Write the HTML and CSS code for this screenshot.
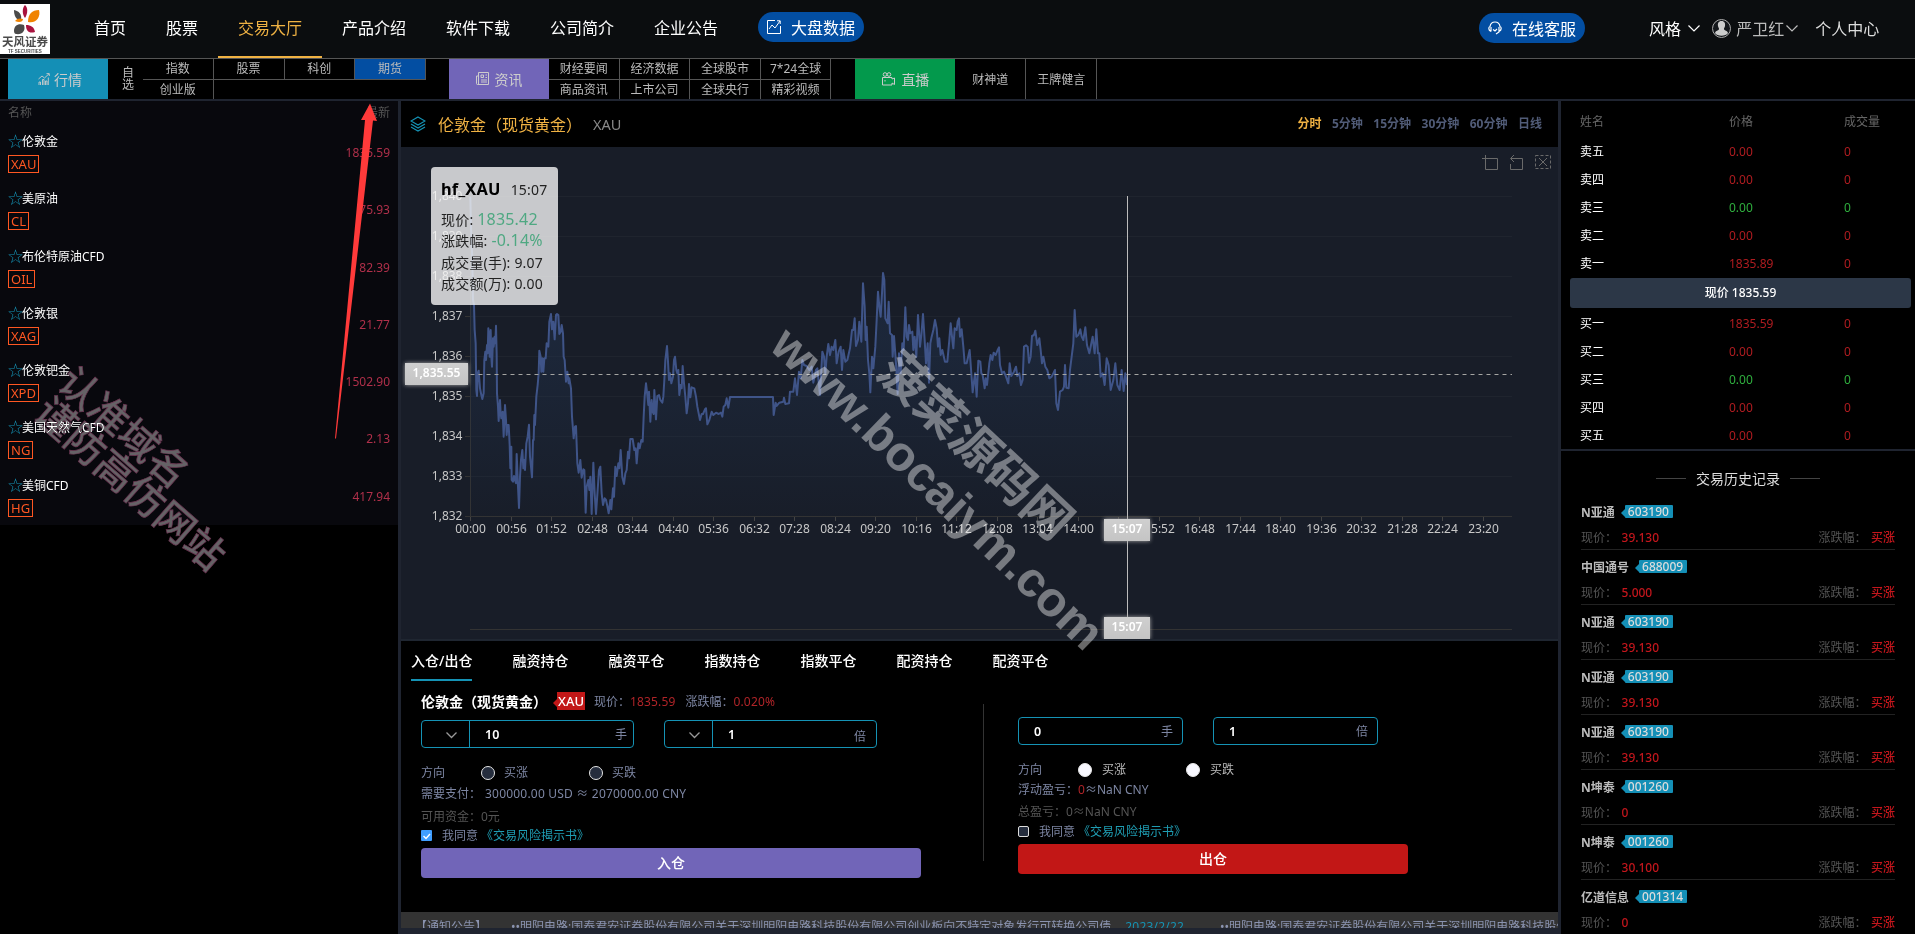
FILE: index.html
```html
<!DOCTYPE html>
<html lang="zh-CN">
<head>
    <meta charset="UTF-8">
    <meta name="viewport" content="width=device-width, initial-scale=1.0">
    <title>交易大厅</title>
    <link rel="stylesheet" href="styles.css">
</head>
<body>

<header class="header">
    <div class="logo">
        <svg width="50" height="50" viewBox="0 0 50 50">
            <rect width="50" height="50" fill="#fff"/>
            <path d="M25 1c3 3 3 8 0 13c-3-4-3-10 0-13z" fill="#a8123e"/>
            <path d="M39 6c2 7-3 14-11 12c0-8 4-12 11-12z" fill="#f08300"/>
            <path d="M14 6c5 1 8 4 7 10c-5 0-7-4-7-10z" fill="#4a4a4a"/>
            <path d="M15 17c2-3 6-3 8-2c0 3-4 4-8 2z" fill="#f08300"/>
            <path d="M14 27c0-5 4-8 10-6c2 6-2 10-8 9c-1 0-2-1-2-3z" fill="#4a4a4a"/>
            <path d="M26 21c5 0 8 2 9 7c-6 2-9-1-9-7z" fill="#a8123e"/>
            <text x="25" y="42" class="logo-cn">天风证券</text>
            <text x="25" y="49" class="logo-en">TF SECURITIES</text>
        </svg>
    </div>
    <nav class="nav">
        <a>首页</a>
        <a>股票</a>
        <a class="active">交易大厅</a>
        <a>产品介绍</a>
        <a>软件下载</a>
        <a>公司简介</a>
        <a>企业公告</a>
    </nav>
    <div class="pill pill-data">
        <svg width="14" height="14" viewBox="0 0 14 14" fill="none" stroke="#fff"><path d="M8 .5H.5v13h13V6M2 9l3-4 3 3 5-7M10 .8h3.2V4"/></svg>
        <span>大盘数据</span>
    </div>
    <div class="pill pill-service">
        <svg width="14" height="14" viewBox="0 0 14 14" fill="none" stroke="#fff" stroke-width="1.2"><path d="M3 10.5C0 9 .5 6 2 5.500C3-.5 11-.5 12 5.500c1.500.5 2 3.500-1 5M3 6v4.500M11 6v5l-3 2M5 8.500l2 1.500 2-2"/></svg>
        <span>在线客服</span>
    </div>
    <div class="user">
        <span class="style-name">风格</span>
        <svg class="arrow" width="12" height="7" viewBox="0 0 12 7" fill="none" stroke="#fff" stroke-width="1.2"><path d="M.5.5L6 6l5.500-5.500"/></svg>
        <svg class="avatar" width="19" height="19" viewBox="0 0 19 19"><circle cx="9.500" cy="9.500" r="9" fill="#14171b" stroke="#aaa"/><path d="M9.500 2c3 0 4 2.500 3.500 5c-.3 1.500-1 2-1 3c0 1.500 3.500 1.500 4 4c-2 3.500-11 3.500-13 0c.5-2.500 4-2.500 4-4c0-1-.7-1.500-1-3c-.5-2.500.5-5 3.500-5z" fill="#ccc"/></svg>
        <span class="user-name">严卫红</span>
        <svg width="12" height="7" viewBox="0 0 12 7" fill="none" stroke="#bbb" stroke-width="1.200"><path d="M.5.5L6 6l5.500-5.500"/></svg>
        <span class="center-link">个人中心</span>
    </div>
</header>

<div class="subnav">
    <div class="block block-quote">
        <svg width="12" height="12" viewBox="0 0 12 12" fill="none" stroke="#ccc" stroke-width=".9"><path d="M1 12V9h1.500v3M4.500 12V6.500H6V12M7.500 12V8H9v4M10.300 12V4.500M.5 6l3.500-3 2.500 2L11 .8M8.500.6h2.800V3"/></svg>
        <span>行情</span>
    </div>
    <div class="self">自选</div>
    <div class="cells cells-quote">
        <a>指数</a><a>股票</a><a>科创</a><a class="on">期货</a>
        <a>创业版</a>
    </div>
    <div class="block block-news">
        <svg width="13" height="13" viewBox="0 0 13 13" fill="none" stroke="#ccc"><path d="M2.500.5h10v12H1.500a1 1 0 0 1-1-1V4h2v7.500M2.500.5V12M5 3h2.500v2.500H5zM9.500 3H11M9.500 5.500H11M5 8h6M5 10h6"/></svg>
        <span>资讯</span>
    </div>
    <div class="cells cells-news">
        <a>财经要闻</a><a>经济数据</a><a>全球股市</a><a>7*24全球</a>
        <a>商品资讯</a><a>上市公司</a><a>全球央行</a><a>精彩视频</a>
    </div>
    <div class="block block-live">
        <svg width="14" height="14" viewBox="0 0 14 14" fill="none" stroke="#ccc"><circle cx="4" cy="2.500" r="1.800"/><circle cx="8" cy="2.500" r="1.800"/><path d="M11 7V5.500H1.500V13H11v-2l2.500 1.500V6zM4 8v1.500"/></svg>
        <span>直播</span>
    </div>
    <div class="cells cells-live">
        <a>财神道</a><a>王牌健言</a>
    </div>
</div>

<div class="main">
    <aside class="left">
        <div class="list">
            <div class="list-head"><span>名称</span><span>最新</span></div>
            <div class="quote"><div><p>伦敦金</p><i>XAU</i></div><b>1835.59</b></div>
            <div class="quote"><div><p>美原油</p><i>CL</i></div><b>75.93</b></div>
            <div class="quote"><div><p>布伦特原油CFD</p><i>OIL</i></div><b>82.39</b></div>
            <div class="quote"><div><p>伦敦银</p><i>XAG</i></div><b>21.77</b></div>
            <div class="quote"><div><p>伦敦钯金</p><i>XPD</i></div><b>1502.90</b></div>
            <div class="quote"><div><p>美国天然气CFD</p><i>NG</i></div><b>2.13</b></div>
            <div class="quote"><div><p>美铜CFD</p><i>HG</i></div><b>417.94</b></div>
        </div>
    </aside>

    <section class="middle">
        <div class="chart-head">
            <svg width="16" height="16" viewBox="0 0 16 16" fill="none" stroke="#1593b5" stroke-width="1.200"><path d="M8 1l7 4-7 4-7-4zM1 8l7 4 7-4M1 11l7 4 7-4"/></svg>
            <h1>伦敦金（现货黄金）</h1>
            <span class="code">XAU</span>
            <div class="periods">
                <a class="on">分时</a><a>5分钟</a><a>15分钟</a><a>30分钟</a><a>60分钟</a><a>日线</a>
            </div>
        </div>

        <div class="chart">
            <svg id="chart" width="1157" height="492" viewBox="401 147 1157 492">
                <defs>
                    <linearGradient id="area" gradientUnits="userSpaceOnUse" x1="0" y1="600" x2="0" y2="1130">
                        <stop offset="0" stop-color="#24395a" stop-opacity=".35"/>
                        <stop offset="1" stop-color="#24395a" stop-opacity=".02"/>
                    </linearGradient>
                    <linearGradient id="tagfill" x1="0" y1="0" x2="0" y2="1">
                        <stop offset="0" stop-color="#cfcfcf"/>
                        <stop offset="1" stop-color="#c4c4c4"/>
                    </linearGradient>
                </defs>
                <g id="grid"></g>
                <!-- price line, drawn in thirds of a pixel -->
                <g id="series" transform="translate(400 140) scale(.33333)"></g>
                <path d="M470.500 374.500H1512" stroke="#a5a5a2" stroke-dasharray="4 4"/>
                <path d="M1127.500 196V629" stroke="#bcbcbc"/>
                <g class="marks">
                    <rect x="405" y="363" width="63" height="22"/><text x="436.500" y="377">1,835.55</text>
                    <rect x="1104" y="519" width="46" height="22"/><text x="1127" y="533">15:07</text>
                    <rect x="1104" y="617" width="46" height="22"/><text x="1127" y="631">15:07</text>
                </g>
                <g fill="none" stroke="#6a6a6a">
                    <path d="M1482 158.500H1497.500V169.500H1485.500V155"/>
                    <path d="M1514 155l-3.500 3.500 3.500 3.500M1511 158.500H1522.500V169.500H1510.500V164"/>
                    <path d="M1535.500 155.500H1550.500V168.500H1535.500Z" stroke-dasharray="3 2"/>
                    <path d="M1539 158l8 8M1547 158l-8 8"/>
                </g>
            </svg>
            <div class="tooltip">
                <p class="tip-title"><strong>hf_XAU</strong>15:07</p>
                <p>现价: <em>1835.42</em></p>
                <p>涨跌幅: <em>-0.14%</em></p>
                <p>成交量(手): 9.07</p>
                <p>成交额(万): 0.00</p>
            </div>
        </div>

        <div class="trade">
            <div class="tabs">
                <a class="on">入仓/出仓</a><a>融资持仓</a><a>融资平仓</a><a>指数持仓</a><a>指数平仓</a><a>配资持仓</a><a>配资平仓</a>
            </div>
            <div class="forms">
                <div class="form form-in">
                    <div class="form-title">
                        <strong>伦敦金（现货黄金）</strong>
                        <span class="flag">XAU</span>
                        <span>现价：</span><span class="red">1835.59</span>
                        <span class="change">涨跌幅：</span><span class="red">0.020%</span>
                    </div>
                    <div class="fields">
                        <div class="field">
                            <div class="drop"><svg width="11" height="7" viewBox="0 0 11 7" fill="none" stroke="#999" stroke-width="1.300"><path d="M.5.5l5 5 5-5"/></svg></div>
                            <b>10</b><span>手</span>
                        </div>
                        <div class="field field-times">
                            <div class="drop"><svg width="11" height="7" viewBox="0 0 11 7" fill="none" stroke="#999" stroke-width="1.300"><path d="M.5.5l5 5 5-5"/></svg></div>
                            <b>1</b><span>倍</span>
                        </div>
                    </div>
                    <div class="direction">
                        <span class="dir-label">方向</span>
                        <span class="option"><i class="radio"></i>买涨</span>
                        <span class="option"><i class="radio"></i>买跌</span>
                    </div>
                    <div class="line pay"><span>需要支付：</span><span class="sum">300000.00 USD ≈ 2070000.00 CNY</span></div>
                    <div class="line dim">可用资金：0元</div>
                    <div class="agree">
                        <i class="check checked"><svg width="11" height="11" viewBox="0 0 11 11" fill="none" stroke="#fff" stroke-width="1.400"><path d="M2.500 6l2.500 2.500L9 4"/></svg></i>
                        <span>我同意</span><a>《交易风险揭示书》</a>
                    </div>
                    <div class="btn btn-in">入仓</div>
                </div>
                <div class="split"></div>
                <div class="form form-out">
                    <div class="fields">
                        <div class="field"><b>0</b><span>手</span></div>
                        <div class="field"><b>1</b><span>倍</span></div>
                    </div>
                    <div class="direction">
                        <span class="dir-label">方向</span>
                        <span class="option"><i class="radio"></i>买涨</span>
                        <span class="option"><i class="radio"></i>买跌</span>
                    </div>
                    <div class="line profit">浮动盈亏：<span class="red">0</span>≈NaN CNY</div>
                    <div class="line dim">总盈亏：0≈NaN CNY</div>
                    <div class="agree">
                        <i class="check"></i>
                        <span>我同意</span><a>《交易风险揭示书》</a>
                    </div>
                    <div class="btn btn-out">出仓</div>
                </div>
            </div>
        </div>

        <div class="notice">
            <span class="notice-name">【通知公告】</span>
            <span class="notice-item">••明阳电路:国泰君安证券股份有限公司关于深圳明阳电路科技股份有限公司创业板向不特定对象发行可转换公司债</span>
            <span class="notice-date">2023/2/22</span>
            <span class="notice-item">••明阳电路:国泰君安证券股份有限公司关于深圳明阳电路科技股份有限公司</span>
        </div>
    </section>

    <aside class="right">
        <div class="depth">
            <div class="depth-row depth-head"><span>姓名</span><span>价格</span><span>成交量</span></div>
            <div class="depth-row"><span>卖五</span><span>0.00</span><span>0</span></div>
            <div class="depth-row"><span>卖四</span><span>0.00</span><span>0</span></div>
            <div class="depth-row down"><span>卖三</span><span>0.00</span><span>0</span></div>
            <div class="depth-row"><span>卖二</span><span>0.00</span><span>0</span></div>
            <div class="depth-row"><span>卖一</span><span>1835.89</span><span>0</span></div>
            <div class="now">现价 1835.59</div>
            <div class="depth-row"><span>买一</span><span>1835.59</span><span>0</span></div>
            <div class="depth-row"><span>买二</span><span>0.00</span><span>0</span></div>
            <div class="depth-row down"><span>买三</span><span>0.00</span><span>0</span></div>
            <div class="depth-row"><span>买四</span><span>0.00</span><span>0</span></div>
            <div class="depth-row"><span>买五</span><span>0.00</span><span>0</span></div>
        </div>
        <div class="history">
            <h2>交易历史记录</h2>
            <div id="records"></div>
        </div>
    </aside>
</div>

<!-- watermark and pointer over the whole page -->
<svg class="overlay overlay-warn" width="1915" height="934" viewBox="0 0 1915 934">
    <g class="mark-warn">
        <text transform="translate(80 388) rotate(41.200)" x="-20" y="15">认准域名</text>
        <text transform="translate(56.700 418.300) rotate(41.200)" x="-20" y="15">谨防高仿网站</text>
    </g>
</svg>
<svg class="overlay" width="1915" height="934" viewBox="0 0 1915 934">
    <g class="mark-site">
        <text transform="translate(768 348) rotate(43.900)" font-size="49">www.bocaiym.com</text>
        <text transform="translate(905 378.300) rotate(43.300)" x="-24.500" y="18" font-size="49">菠菜源码网</text>
    </g>
    <path d="M370 103.500L377 121L373 120.500L336 438.500H335L365 120L361 120Z" fill="#ff3a3a"/>
</svg>

<script src="script.js"></script>
</body>
</html>
```

FILE: styles.css
```css
* {
    box-sizing: border-box;
}
body {
    margin: 0;
    width: 1915px;
    height: 934px;
    overflow: hidden;
    position: relative;
    background: #000;
    color: #fff;
    font-family: "Noto Sans", "Noto Sans CJK SC", sans-serif;
    font-size: 12px;
}
p, h1, h2 {
    margin: 0;
    font-weight: normal;
}
i, em {
    font-style: normal;
}
svg {
    display: block;
    flex: none;
}
.red {
    color: #b02428;
}

/* header */
.header {
    display: flex;
    align-items: center;
    height: 59px;
    padding-bottom: 2px;
    background: #0b0d0f;
    border-bottom: 1px solid #555;
    font-size: 16px;
}
.logo {
    width: 50px;
    margin: 1px 24px 0 0;
}
.logo-cn {
    font: bold 11.500px "Noto Sans CJK SC", sans-serif;
    text-anchor: middle;
    fill: #4a4a4a;
}
.logo-en {
    font: bold 4.500px "Liberation Sans", sans-serif;
    text-anchor: middle;
    fill: #4a4a4a;
}
.nav {
    display: flex;
    align-self: stretch;
    margin-bottom: -2px;
}
.nav a {
    padding: 0 20px;
    line-height: 56px;
    height: 58px;
}
.nav .active {
    color: #f0b243;
    border-bottom: 2px solid #f0b243;
}
.pill {
    display: flex;
    align-items: center;
    gap: 10px;
    height: 30px;
    margin-top: -2px;
    border-radius: 15px;
    background: #034ea2;
}
.pill-data {
    width: 106px;
    padding-left: 9px;
    margin-left: 20px;
}
.pill-service {
    width: 106px;
    padding-left: 9px;
    margin-left: 615px;
    margin-top: 0;
}
.user {
    display: flex;
    align-items: center;
    margin-left: 64px;
}
.arrow {
    margin: 0 12px 0 7px;
}
.user-name {
    margin: 0 2px 0 5px;
    color: #bbb;
}
.center-link {
    margin-left: 17px;
    color: #ddd;
}

/* second menu */
.subnav {
    display: flex;
    height: 42px;
    padding-left: 8px;
    border-bottom: 2px solid #1f2430;
    color: #bbb;
}
.block {
    display: flex;
    align-items: center;
    justify-content: center;
    gap: 4px;
    width: 100px;
    height: 40px;
    padding-bottom: 1px;
    font-size: 14px;
    color: #ccc;
}
.block-quote {
    padding-left: 4px;
    background: #148fb6;
}
.block-news {
    margin-left: 23px;
    gap: 6px;
    background: #7165b8;
}
.block-live {
    margin-left: 24px;
    gap: 6px;
    background: #03994c;
}
.self {
    width: 12px;
    margin: 8px 9px 0 14px;
    line-height: 12px;
}
.cells {
    display: grid;
    grid-template-columns: repeat(4, 70.750px);
    grid-template-rows: 21px 19px;
}
.cells a {
    border-right: 1px solid #555;
    text-align: center;
    line-height: 20px;
}
.cells-quote a:nth-child(-n+4),
.cells-news a:nth-child(-n+4) {
    border-bottom: 1px solid #555;
}
.cells-news {
    grid-template-columns: repeat(4, 70.600px);
}
.cells .on {
    background: #034ea2;
}
.cells-live {
    grid-template-columns: repeat(2, 71px);
    grid-template-rows: 40px;
}
.cells-live a {
    line-height: 41px;
}

.main {
    display: flex;
    height: 833px;
}

/* quote list */
.left {
    width: 401px;
    border-right: 3px solid #1f2430;
}
.list {
    height: 424px;
    padding: 0 8px;
    background: #08080d;
}
.list-head {
    display: flex;
    justify-content: space-between;
    height: 22px;
    line-height: 24px;
    color: #555;
}
.quote {
    display: flex;
    justify-content: space-between;
    height: 57.300px;
    padding-top: 9px;
}
.quote p {
    line-height: 20px;
    height: 20px;
}
.quote p::before {
    content: "☆";
    color: #1593b5;
    font: 19px/12px "DejaVu Sans", sans-serif;
    display: inline-block;
    width: 14px;
    text-indent: -1px;
    vertical-align: -2px;
}
.quote i {
    display: inline-block;
    height: 18px;
    margin-top: 3px;
    padding: 0 2px;
    border: 1px solid #ff5722;
    color: #ff5722;
    font-size: 13px;
    line-height: 17px;
}
.quote b {
    margin-top: 12px;
    font-weight: normal;
    line-height: 18px;
    color: #b0304a;
}

/* chart */
.middle {
    width: 1157px;
    border-bottom: 6px solid #1f2430;
}
.chart-head {
    display: flex;
    align-items: center;
    height: 46px;
    padding: 0 16px 0 9px;
}
.chart-head h1 {
    margin-left: 12px;
    font-size: 16px;
    color: #f0b243;
}
.code {
    margin-left: 11px;
    font-size: 14.500px;
    color: #888;
}
.periods {
    display: flex;
    gap: 10.500px;
    margin: -2px 0 0 auto;
    font-weight: bold;
    color: #515c78;
}
.periods .on {
    color: #f0b243;
}
.chart {
    position: relative;
    height: 494px;
    background: #181d28;
    border-bottom: 2px solid #1f2631;
}
.marks rect {
    fill: url(#tagfill);
    filter: drop-shadow(0 0 2px #aaa);
}
.marks text {
    fill: #fff;
    text-anchor: middle;
    font-weight: 600;
}
.axis-text {
    fill: #c8c8c8;
}
.tooltip {
    position: absolute;
    left: 30px;
    top: 20px;
    width: 127px;
    height: 138px;
    padding: 11px 10px;
    border-radius: 4px;
    background: rgba(245, 245, 245, .8);
    color: #222;
    font-size: 14px;
    line-height: 21.600px;
    letter-spacing: .2px;
    white-space: nowrap;
}
.tip-title {
    margin-bottom: 8px;
}
.tip-title strong {
    margin-right: 10px;
    font-size: 16.400px;
    color: #000;
}
.tooltip em {
    font-size: 16px;
    line-height: 16px;
    color: #4fa882;
}

/* trade forms */
.trade {
    height: 271px;
    padding: 0 10px;
}
.tabs {
    display: flex;
    gap: 40px;
    font-size: 14px;
    font-weight: 500;
    line-height: 40px;
}
.tabs a {
    height: 40px;
}
.tabs .on {
    border-bottom: 2px solid #1593b5;
}
.forms {
    display: flex;
    padding-left: 10px;
    color: #7d86a3;
}
.form-in {
    width: 500px;
}
.split {
    width: 1px;
    height: 157px;
    margin: 23px 34px 0 62px;
    background: #333;
}
.form-out {
    width: 390px;
    padding-top: 36px;
}
.form-title {
    display: flex;
    align-items: center;
    height: 28px;
    margin-top: 6px;
}
.form-title strong {
    width: 136px;
    font-size: 14px;
    color: #fff;
}
.flag {
    position: relative;
    width: 28px;
    height: 18px;
    margin-right: 9px;
    background: #c21717;
    color: #fff;
    font-size: 13px;
    font-weight: 500;
    line-height: 18px;
    text-align: center;
}
.flag::before {
    content: "";
    position: absolute;
    left: -4px;
    top: 7px;
    border: 4px solid transparent;
    border-left: 0;
    border-right-color: #c21717;
}
.change {
    margin-left: 10px;
}
.form-title .red {
    letter-spacing: .15px;
}
.fields {
    display: flex;
    gap: 30px;
}
.form-in .fields {
    margin-top: 5px;
}
.field {
    display: flex;
    align-items: center;
    width: 213px;
    height: 28px;
    padding-right: 6px;
    border: 1px solid #1593b5;
    border-radius: 4px;
}
.field b {
    flex: 1;
    margin-left: 15px;
    color: #fff;
    font-size: 12.500px;
    font-weight: 600;
}
.field-times {
    padding-right: 10px;
}
.field-times span {
    margin-top: 3px;
}
.form-out .field {
    width: 165px;
    padding-right: 9px;
}
.drop {
    display: flex;
    align-items: center;
    justify-content: flex-end;
    width: 48px;
    height: 26px;
    padding: 3px 12px 0 0;
    border-right: 1px solid #1593b5;
}
.direction {
    display: flex;
    height: 20px;
    margin-top: 15px;
    line-height: 20px;
}
.dir-label {
    width: 60px;
}
.option {
    display: flex;
    align-items: center;
    width: 108px;
}
.radio {
    width: 14px;
    height: 14px;
    margin-right: 9px;
    border: 1px solid #e6e6e6;
    border-radius: 50%;
    background: #252d3d;
}
.form-out .radio {
    background: #f8f8ff;
    margin-right: 10px;
}
.form-out .option {
    color: #bbb;
}
.line {
    height: 20px;
    line-height: 20px;
}
.pay {
    display: flex;
    gap: 4px;
    margin-top: 1px;
}
.sum {
    letter-spacing: .2px;
}
.dim {
    margin-top: 3px;
    color: #555;
}
.form-out .dim {
    margin-top: 2px;
}
.agree {
    display: flex;
    align-items: center;
    height: 16px;
}
.form-out .agree {
    margin-top: 1px;
}
.check {
    width: 11px;
    height: 11px;
    margin-right: 10px;
    border: 1px solid #ddd;
    border-radius: 2px;
    background: #252d3d;
}
.checked {
    border: 0;
    border-radius: 1px;
    background: #409eff;
}
.agree a {
    margin-left: 3px;
    color: #1f9db3;
}
.btn {
    height: 30px;
    margin-top: 5px;
    border-radius: 4px;
    color: #fff;
    font-size: 14px;
    font-weight: 500;
    line-height: 30px;
    text-align: center;
}
.btn-in {
    background: #7165b8;
}
.btn-out {
    background: #c21716;
}
.notice {
    display: flex;
    height: 16px;
    padding-left: 14px;
    overflow: hidden;
    background: #333;
    color: #8a93b0;
    line-height: 30px;
    white-space: nowrap;
}
.notice-name {
    width: 96px;
    flex: none;
}
.notice-item {
    flex: none;
}
.notice-date {
    margin: 0 36px 0 14px;
    letter-spacing: .2px;
    color: #1593b5;
}

/* right column */
.right {
    width: 357px;
    border-left: 3px solid #1f2430;
}
.depth {
    height: 350px;
    padding: 8px 4px 0 9px;
    border-bottom: 2px solid #1f2430;
}
.depth-row {
    display: grid;
    grid-template-columns: 149px 115px auto;
    height: 28px;
    padding-left: 10px;
    line-height: 28px;
    color: #b01c20;
}
.depth-row span:first-child {
    color: #fff;
}
.depth-head {
    height: 29px;
    line-height: 26px;
}
.depth-head span,
.depth-head span:first-child {
    color: #666;
}
.down {
    color: #2fae3e;
}
.down span:first-child {
    color: #fff;
}
.now {
    height: 30px;
    margin-bottom: 2px;
    border-radius: 3px;
    background: #2c3747;
    line-height: 30px;
    text-align: center;
    font-weight: 500;
}
.history {
    padding: 14px 20px 0;
}
.history h2 {
    display: flex;
    align-items: center;
    justify-content: center;
    gap: 10px;
    height: 26px;
    margin-bottom: 4px;
    font-size: 14px;
    color: #ddd;
}
.history h2::before,
.history h2::after {
    content: "";
    width: 30px;
    height: 1px;
    background: #444;
}
.record {
    height: 55px;
    border-bottom: 1px solid #222;
}
.record-name {
    display: flex;
    align-items: center;
    gap: 10px;
    height: 33px;
    font-weight: bold;
    color: #bbb;
}
.stock {
    position: relative;
    height: 13px;
    padding: 0 4px 0 3px;
    border-radius: 1px;
    background: #148fb6;
    color: #ddd;
    font-weight: 500;
    line-height: 13px;
}
.stock::before {
    content: "";
    position: absolute;
    left: -4px;
    top: 4px;
    border: 4px solid transparent;
    border-left: 0;
    border-right-color: #148fb6;
}
.record-price {
    display: flex;
    line-height: 20px;
    color: #555;
}
.record-price b {
    margin-left: 4.500px;
    font-weight: 500;
    color: #c4161c;
}
.record-price .rate {
    margin-left: auto;
}

.overlay {
    position: absolute;
    left: 0;
    top: 0;
    pointer-events: none;
}
.overlay-warn {
    mix-blend-mode: lighten;
}
.mark-site {
    font-family: "Liberation Sans", "Noto Sans CJK SC", sans-serif;
    font-weight: bold;
    fill: rgba(255, 255, 255, .41);
}
.mark-warn {
    font: 500 39.500px "Noto Sans CJK SC", sans-serif;
    fill: #656266;
    stroke: #6a3450;
    stroke-width: .7px;
}
```

FILE: script.js
```js
const NS = 'http://www.w3.org/2000/svg';

function add(parent, tag, attrs, text) {
    const el = document.createElementNS(NS, tag);
    for (const key in attrs) el.setAttribute(key, attrs[key]);
    if (text) el.textContent = text;
    parent.appendChild(el);
}

// axes and grid
const grid = document.getElementById('grid');
for (let i = 0; i <= 8; i++) {
    const y = 516.5 - i * 40;
    add(grid, 'path', { d: `M470 ${y}H1512`, stroke: i ? '#1f242e' : '#333' });
    add(grid, 'path', { d: `M465 ${y}H470`, stroke: '#333' });
    add(grid, 'text', { x: 462.5, y: y + 3, class: 'axis-text', 'text-anchor': 'end' }, '1,' + (832 + i));
}
add(grid, 'path', { d: 'M470.5 196V517M470 629.5H1512', stroke: '#333', fill: 'none' });
for (let i = 0; i <= 25; i++) {
    const x = Math.round(470 + i * 40.51) + 0.5;
    const min = i * 56;
    const label = String(Math.floor(min / 60)).padStart(2, '0') + ':' + String(min % 60).padStart(2, '0');
    add(grid, 'path', { d: `M${x} 517V521`, stroke: '#444' });
    add(grid, 'text', { x: x, y: 533, class: 'axis-text', 'text-anchor': 'middle' }, label);
}

// night session, then day session
const night = '211,170 213,260 217,360 219,480 222,495 224,570 227,610 229,750 231,768 233,700 236,692 240,745 244,765 247,777 251,760 253,660 256,635 258,660 261,615 263,640 265,565 268,600 269,650 272,570 274,650 276,680 279,595 281,620 284,590 286,610 288,557 290,640 291,760 294,800 296,843 300,780 302,820 304,835 308,815 311,890 315,795 318,840 320,885 323,855 326,855 329,915 331,985 334,920 335,1020 339,1025 342,1008 345,1020 348,1030 350,942 354,1040 357,1104 360,1010 363,960 367,930 370,985 373,960 375,990 379,910 383,890 387,854 390,950 393,980 396,1012 399,900 401,900 403,825 405,855 409,770 413,735 416,700 418,632 422,650 424,695 427,655 430,695 433,655 437,655 440,610 445,620 448,545 453,522 456,568 460,545 464,598 468,525 471,522 475,525 478,582 482,575 485,555 489,580 491,650 494,660 498,725 502,695 506,730 508,715 513,745 516,830 518,855 521,895 525,860 528,858 532,970 536,998 541,960 545,1013 550,988 553,990 557,1118 560,1040 565,1020 568,1050 571,1010 575,1122 580,968 584,1060 588,1122 593,1050 597,990 601,980 605,1060 609,1095 614,1075 618,1080 622,1098 626,1120 631,1080 634,1108 639,1045 642,1070 646,980 650,1008 655,970 658,985 662,930 667,1012 672,1032 676,1000 680,990 684,935 687,955 691,897 698,897 703,930 707,925 710,970 715,910 719,925 724,900 728,905 731,830 734,770 738,730 742,765 745,795 747,755 751,845 755,780 758,815 761,822 763,750 768,838 772,768 777,765 781,780 787,788 790,770 793,720 796,660 801,618 804,665 807,720 810,700 814,730 819,710 822,660 825,650 829,690 832,700 835,690 838,765 842,735 845,745 848,678 852,730 856,770 860,820 864,790 867,732 871,772 875,742 883,745 888,770 892,800 896,820 900,840 905,822 909,822 915,808 918,805 922,853 928,840 935,815 940,825 948,818 956,822 963,818 967,830 971,800 976,795 980,775 985,803 990,771';
const day = '39,471 41,525 47,488 50,498 58,488 70,485 72,473 76,492 87,490 90,455 100,455 105,415 111,465 117,395 122,415 127,360 132,375 140,378 148,390 155,380 160,428 168,390 172,385 180,465 187,335 192,350 196,400 200,350 205,312 210,345 215,320 220,330 226,300 230,370 236,335 242,320 246,390 250,330 256,365 262,360 270,325 276,270 280,270 284,235 288,318 294,300 298,245 304,305 309,130 314,200 317,300 320,260 324,360 328,400 331,457 336,350 340,385 346,320 350,240 354,155 358,200 362,230 366,160 369,99 373,120 376,235 383,250 386,185 390,280 396,285 398,350 402,288 408,370 413,462 417,340 422,400 427,310 431,330 436,202 440,290 444,300 447,255 451,280 457,275 460,330 464,290 469,350 474,225 480,320 484,285 489,222 494,300 498,370 503,310 507,428 511,310 515,290 520,270 525,240 530,265 534,320 538,295 542,345 547,330 555,365 562,365 568,300 572,250 576,290 580,325 584,265 590,270 593,245 597,235 600,290 605,268 610,320 614,370 620,370 629,330 634,400 638,457 645,400 650,470 655,362 661,365 664,400 668,405 674,445 677,415 681,435 688,370 692,345 697,360 701,338 707,345 713,330 717,322 720,375 726,400 732,395 738,410 745,430 749,370 754,408 762,395 768,380 772,408 778,400 783,435 788,420 792,320 798,316 803,320 807,368 812,350 816,288 822,285 826,272 832,315 838,295 842,330 846,370 850,350 856,380 862,390 868,415 875,410 880,400 885,390 889,490 894,510 900,455 908,450 912,440 915,375 919,443 926,445 930,390 935,350 940,310 944,210 949,290 955,285 961,268 965,290 970,300 976,262 981,315 988,340 993,315 998,290 1004,340 1009,268 1014,340 1018,340 1022,410 1028,400 1034,435 1040,355 1046,375 1052,450 1060,420 1066,370 1072,435 1079,450 1085,390 1091,453 1096,400 1101,435';

const parse = s => s.split(' ').map(p => p.split(',').map(Number));
const line = parse(night).concat(parse(day).map(([x, y]) => [x + 1080, y + 300])).join(' ');
const series = document.getElementById('series');
add(series, 'polygon', { points: `211,1130 ${line} 2181,1130`, fill: 'url(#area)' });
add(series, 'polyline', { points: line, fill: 'none', stroke: '#3f5488', 'stroke-width': 6, 'stroke-linejoin': 'round' });

// trade history
const records = [
    ['N亚通', '603190', '39.130'],
    ['中国通号', '688009', '5.000'],
    ['N亚通', '603190', '39.130'],
    ['N亚通', '603190', '39.130'],
    ['N亚通', '603190', '39.130'],
    ['N坤泰', '001260', '0'],
    ['N坤泰', '001260', '30.100'],
    ['亿道信息', '001314', '0']
];
document.getElementById('records').innerHTML = records.map(([name, code, price]) => `
    <div class="record">
        <div class="record-name">${name}<span class="stock">${code}</span></div>
        <div class="record-price"><span>现价：</span><b>${price}</b><span class="rate">涨跌幅：</span><b>买涨</b></div>
    </div>
`).join('');
```
